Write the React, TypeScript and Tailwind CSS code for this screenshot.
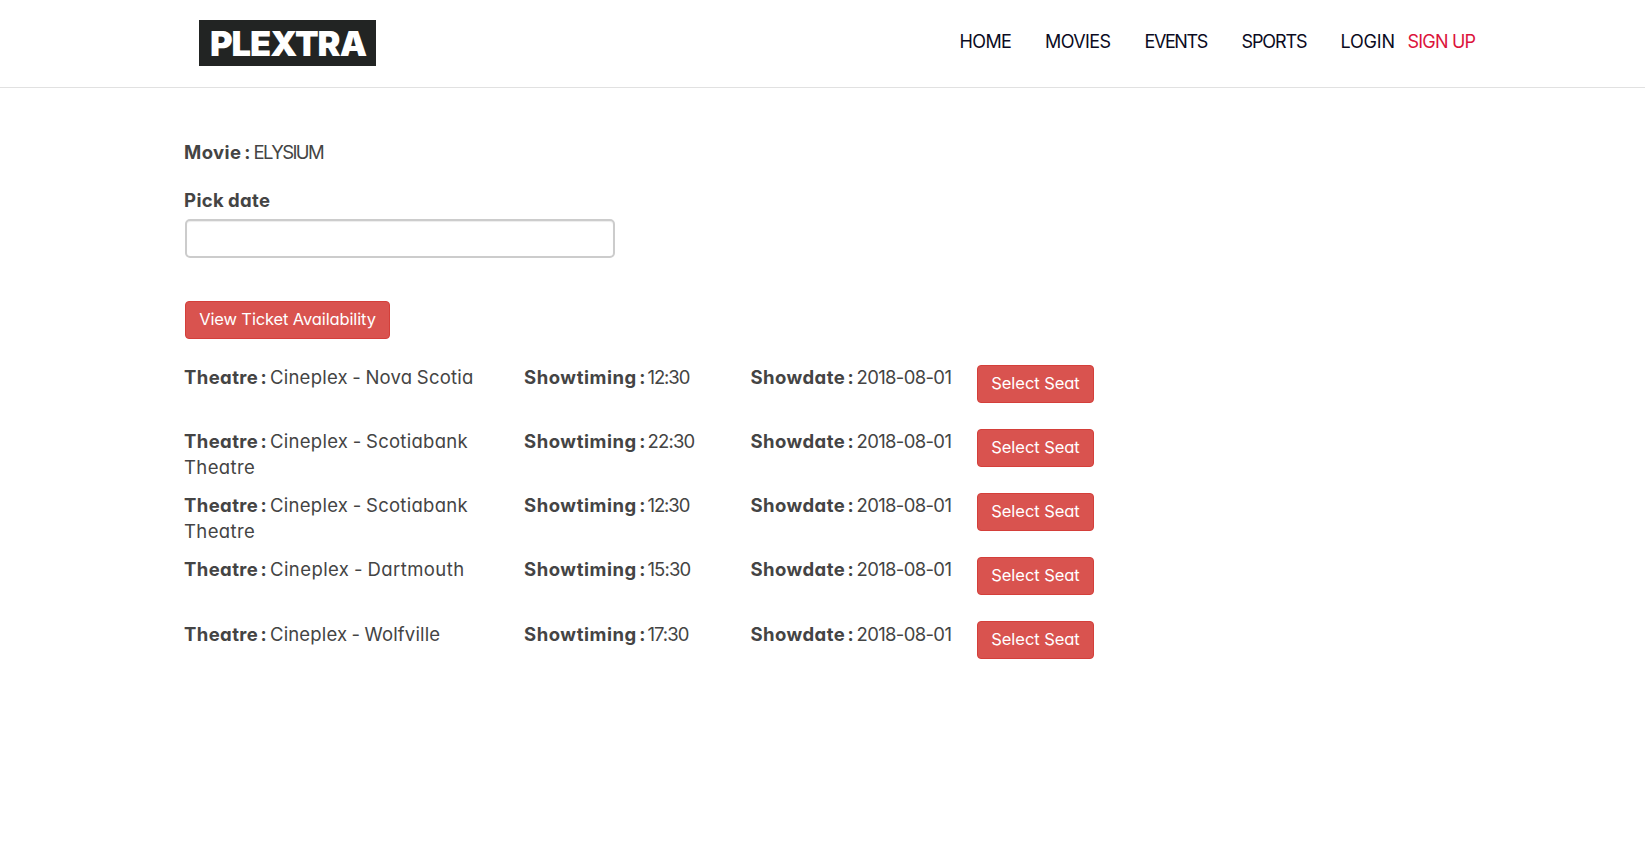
type Show = {
  theatre: string;
  theatreClass: string;
  secondLine?: string;
  time: string;
  timeClass: string;
};

const shows: Show[] = [
  { theatre: 'Cineplex - Nova Scotia', theatreClass: 'tracking-[0.23px]', time: '12:30', timeClass: 'tracking-[-1.1px]' },
  { theatre: 'Cineplex - Scotiabank', theatreClass: 'tracking-[0.28px]', secondLine: 'Theatre', time: '22:30', timeClass: 'tracking-[-0.8px]' },
  { theatre: 'Cineplex - Scotiabank', theatreClass: 'tracking-[0.28px]', secondLine: 'Theatre', time: '12:30', timeClass: 'tracking-[-1.1px]' },
  { theatre: 'Cineplex - Dartmouth', theatreClass: 'tracking-[0.42px]', time: '15:30', timeClass: 'tracking-[-0.9px]' },
  { theatre: 'Cineplex - Wolfville', theatreClass: 'tracking-[0.15px]', time: '17:30', timeClass: 'tracking-[-1px]' },
];

const links = [
  { label: 'HOME', className: 'w-[85.5px] tracking-[-0.6px]' },
  { label: 'MOVIES', className: 'w-[99.5px] tracking-[-0.6px]' },
  { label: 'EVENTS', className: 'w-[97px] tracking-[-1.4px]' },
  { label: 'SPORTS', className: 'w-[99px] tracking-[-1.1px]' },
  { label: 'LOGIN', className: 'w-[67px] tracking-[-0.2px]' },
  { label: 'SIGN UP', className: 'w-[72px] tracking-[-0.8px] text-[#dc143c]' },
];

function Header() {
  return (
    <header className="flex h-[88px] border-b border-[#e1e1e1] pl-[199px] pt-5">
      <div className="flex h-[46px] w-[177px] items-center justify-center bg-[#222423] pl-px pt-0.5">
        <span className="text-[34.5px] font-black leading-[46px] tracking-[-1px] text-white">PLEXTRA</span>
      </div>
      <nav className="ml-[583.5px] flex pt-[9px] text-[18px] leading-[26px] text-[#0b0b22]">
        {links.map((link) => (
          <a key={link.label} href="#" className={`whitespace-nowrap ${link.className}`}>
            {link.label}
          </a>
        ))}
      </nav>
    </header>
  );
}

function SelectButton() {
  return (
    <button className="mt-px h-[38px] w-[117px] whitespace-nowrap rounded-[4px] border border-[#d43f3a] bg-[#d9534f] pb-0.5 text-[16.5px] leading-[34px] tracking-[-0.05px] text-white">
      Select Seat
    </button>
  );
}

export default function App() {
  return (
    <div className="min-h-[850px] bg-white font-['Inter',sans-serif] text-[18.5px] leading-[26px] text-[#444] [font-feature-settings:'cv11']">
      <Header />
      <main className="pl-[185px] pt-[51px]">
        <p className="flex h-12">
          <b className="-ml-px w-[69.5px] tracking-[0.4px] [word-spacing:-2px]">Movie :</b>
          <span className="font-[380] tracking-[-1.6px]">ELYSIUM</span>
        </p>
        <label className="-ml-px block h-8 font-bold tracking-[0.4px] [word-spacing:-1px]">Pick date</label>
        <input className="block h-[39px] w-[430px] rounded-[5px] border-2 border-[#ccc] bg-white px-3 shadow-[inset_0_1px_1px_rgba(0,0,0,0.075)]" />
        <button className="mt-[43px] block h-[38px] w-[205px] whitespace-nowrap rounded-[4px] border border-[#d43f3a] bg-[#d9534f] pb-0.5 text-[16.5px] leading-[34px] tracking-[-0.13px] text-white">
          View Ticket Availability
        </button>
        <section className="mt-[25px]">
          {shows.map((show, i) => (
            <div key={i} className="group flex h-16">
              <div className="w-[339px] group-last:pt-px">
                <div className="flex">
                  <b className="-ml-px w-[86px] tracking-[0.4px] [word-spacing:-2.5px]">Theatre :</b>
                  <span className={`whitespace-nowrap font-[380] [word-spacing:-1px] ${show.theatreClass}`}>{show.theatre}</span>
                </div>
                {show.secondLine && <div className="-ml-px font-[380] tracking-[0.4px]">{show.secondLine}</div>}
              </div>
              <div className="flex w-[226px] group-last:pt-px">
                <b className="w-[123.5px] tracking-[0.55px] [word-spacing:-2.5px]">Showtiming :</b>
                <span className={`font-[380] ${show.timeClass}`}>{show.time}</span>
              </div>
              <div className="flex w-[227px] group-last:pt-px">
                <b className="w-[106.5px] pl-[0.5px] tracking-[0.45px] [word-spacing:-2.5px]">Showdate :</b>
                <span className="whitespace-nowrap font-[380] tracking-[-0.65px]">2018-08-01</span>
              </div>
              <SelectButton />
            </div>
          ))}
        </section>
      </main>
    </div>
  );
}
